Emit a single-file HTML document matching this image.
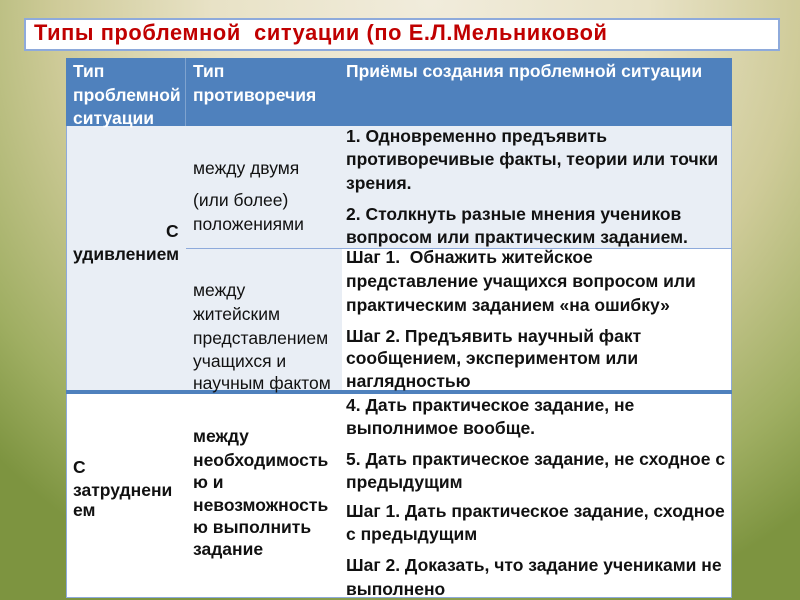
<!DOCTYPE html>
<html><head><meta charset="utf-8"><style>
body{margin:0;width:800px;height:600px;overflow:hidden;position:relative;
background:radial-gradient(ellipse 620px 640px at 430px 0px,#f1ecdc 0%,#e8e2c6 35%,#cfcb99 60%,#9fae62 85%,#7d9440 100%);
font-family:"Liberation Sans","DejaVu Sans",sans-serif;}
.a{position:absolute;white-space:nowrap;line-height:20px;font-size:17.5px;color:#111}
.b{font-weight:bold}
.h{color:#fff}
.t{position:absolute;left:24px;top:18px;width:756px;height:33px;background:#fff;border:2px solid #8eaadb;box-sizing:border-box}
.tt{position:absolute;left:34px;top:20px;font-size:21.8px;font-weight:bold;color:#c00000;letter-spacing:0.6px;white-space:nowrap}
</style></head><body>
<div class="t"></div><div class="tt">Типы проблемной&nbsp; ситуации (по Е.Л.Мельниковой</div>
<div style="position:absolute;left:66px;top:58px;width:666px;height:68px;background:#4f81bd"></div>
<div style="position:absolute;left:185px;top:58px;width:1px;height:68px;background:#7fa3cf"></div>
<div style="position:absolute;left:66px;top:126px;width:666px;height:265px;background:#e9eef5;border-left:1px solid #8eaadb;border-right:1px solid #8eaadb;box-sizing:border-box"></div>
<div style="position:absolute;left:342px;top:249px;width:389px;height:142px;background:#fff"></div>
<div style="position:absolute;left:186px;top:248px;width:545px;height:1px;background:#8eaadb"></div>
<div style="position:absolute;left:66px;top:390px;width:666px;height:4px;background:#4f81bd"></div>
<div style="position:absolute;left:66px;top:394px;width:666px;height:204px;background:#fff;border:1px solid #8eaadb;border-top:none;box-sizing:border-box"></div>

<div class="a b h" style="left:73px;top:61px">Тип</div>
<div class="a b h" style="left:73px;top:85px">проблемной</div>
<div class="a b h" style="left:73px;top:108px">ситуации</div>
<div class="a b h" style="left:193px;top:61px">Тип</div>
<div class="a b h" style="left:193px;top:85px">противоречия</div>
<div class="a b h" style="left:346px;top:61px">Приёмы создания проблемной ситуации</div>

<div class="a b" style="left:166px;top:221px">С</div>
<div class="a b" style="left:73px;top:244px">удивлением</div>
<div class="a" style="left:193px;top:158px">между двумя</div>
<div class="a" style="left:193px;top:190px">(или более)</div>
<div class="a" style="left:193px;top:214px">положениями</div>
<div class="a b" style="left:346px;top:126px">1. Одновременно предъявить</div>
<div class="a b" style="left:346px;top:149px">противоречивые факты, теории или точки</div>
<div class="a b" style="left:346px;top:173px">зрения.</div>
<div class="a b" style="left:346px;top:204px">2. Столкнуть разные мнения учеников</div>
<div class="a b" style="left:346px;top:227px">вопросом или практическим заданием.</div>

<div class="a" style="left:193px;top:280px">между</div>
<div class="a" style="left:193px;top:304px">житейским</div>
<div class="a" style="left:193px;top:328px">представлением</div>
<div class="a" style="left:193px;top:351px">учащихся и</div>
<div class="a" style="left:193px;top:373px">научным фактом</div>
<div class="a b" style="left:346px;top:247px">Шаг 1.&nbsp; Обнажить житейское</div>
<div class="a b" style="left:346px;top:271px">представление учащихся вопросом или</div>
<div class="a b" style="left:346px;top:295px">практическим заданием «на ошибку»</div>
<div class="a b" style="left:346px;top:326px">Шаг 2. Предъявить научный факт</div>
<div class="a b" style="left:346px;top:348px">сообщением, экспериментом или</div>
<div class="a b" style="left:346px;top:371px">наглядностью</div>

<div class="a b" style="left:73px;top:457px">С</div>
<div class="a b" style="left:73px;top:480px">затруднени</div>
<div class="a b" style="left:73px;top:500px">ем</div>
<div class="a b" style="left:193px;top:426px">между</div>
<div class="a b" style="left:193px;top:450px">необходимость</div>
<div class="a b" style="left:193px;top:472px">ю и</div>
<div class="a b" style="left:193px;top:495px">невозможность</div>
<div class="a b" style="left:193px;top:517px">ю выполнить</div>
<div class="a b" style="left:193px;top:539px">задание</div>
<div class="a b" style="left:346px;top:395px">4. Дать практическое задание, не</div>
<div class="a b" style="left:346px;top:418px">выполнимое вообще.</div>
<div class="a b" style="left:346px;top:449px">5. Дать практическое задание, не сходное с</div>
<div class="a b" style="left:346px;top:472px">предыдущим</div>
<div class="a b" style="left:346px;top:501px">Шаг 1. Дать практическое задание, сходное</div>
<div class="a b" style="left:346px;top:524px">с предыдущим</div>
<div class="a b" style="left:346px;top:555px">Шаг 2. Доказать, что задание учениками не</div>
<div class="a b" style="left:346px;top:579px">выполнено</div>
</body></html>
